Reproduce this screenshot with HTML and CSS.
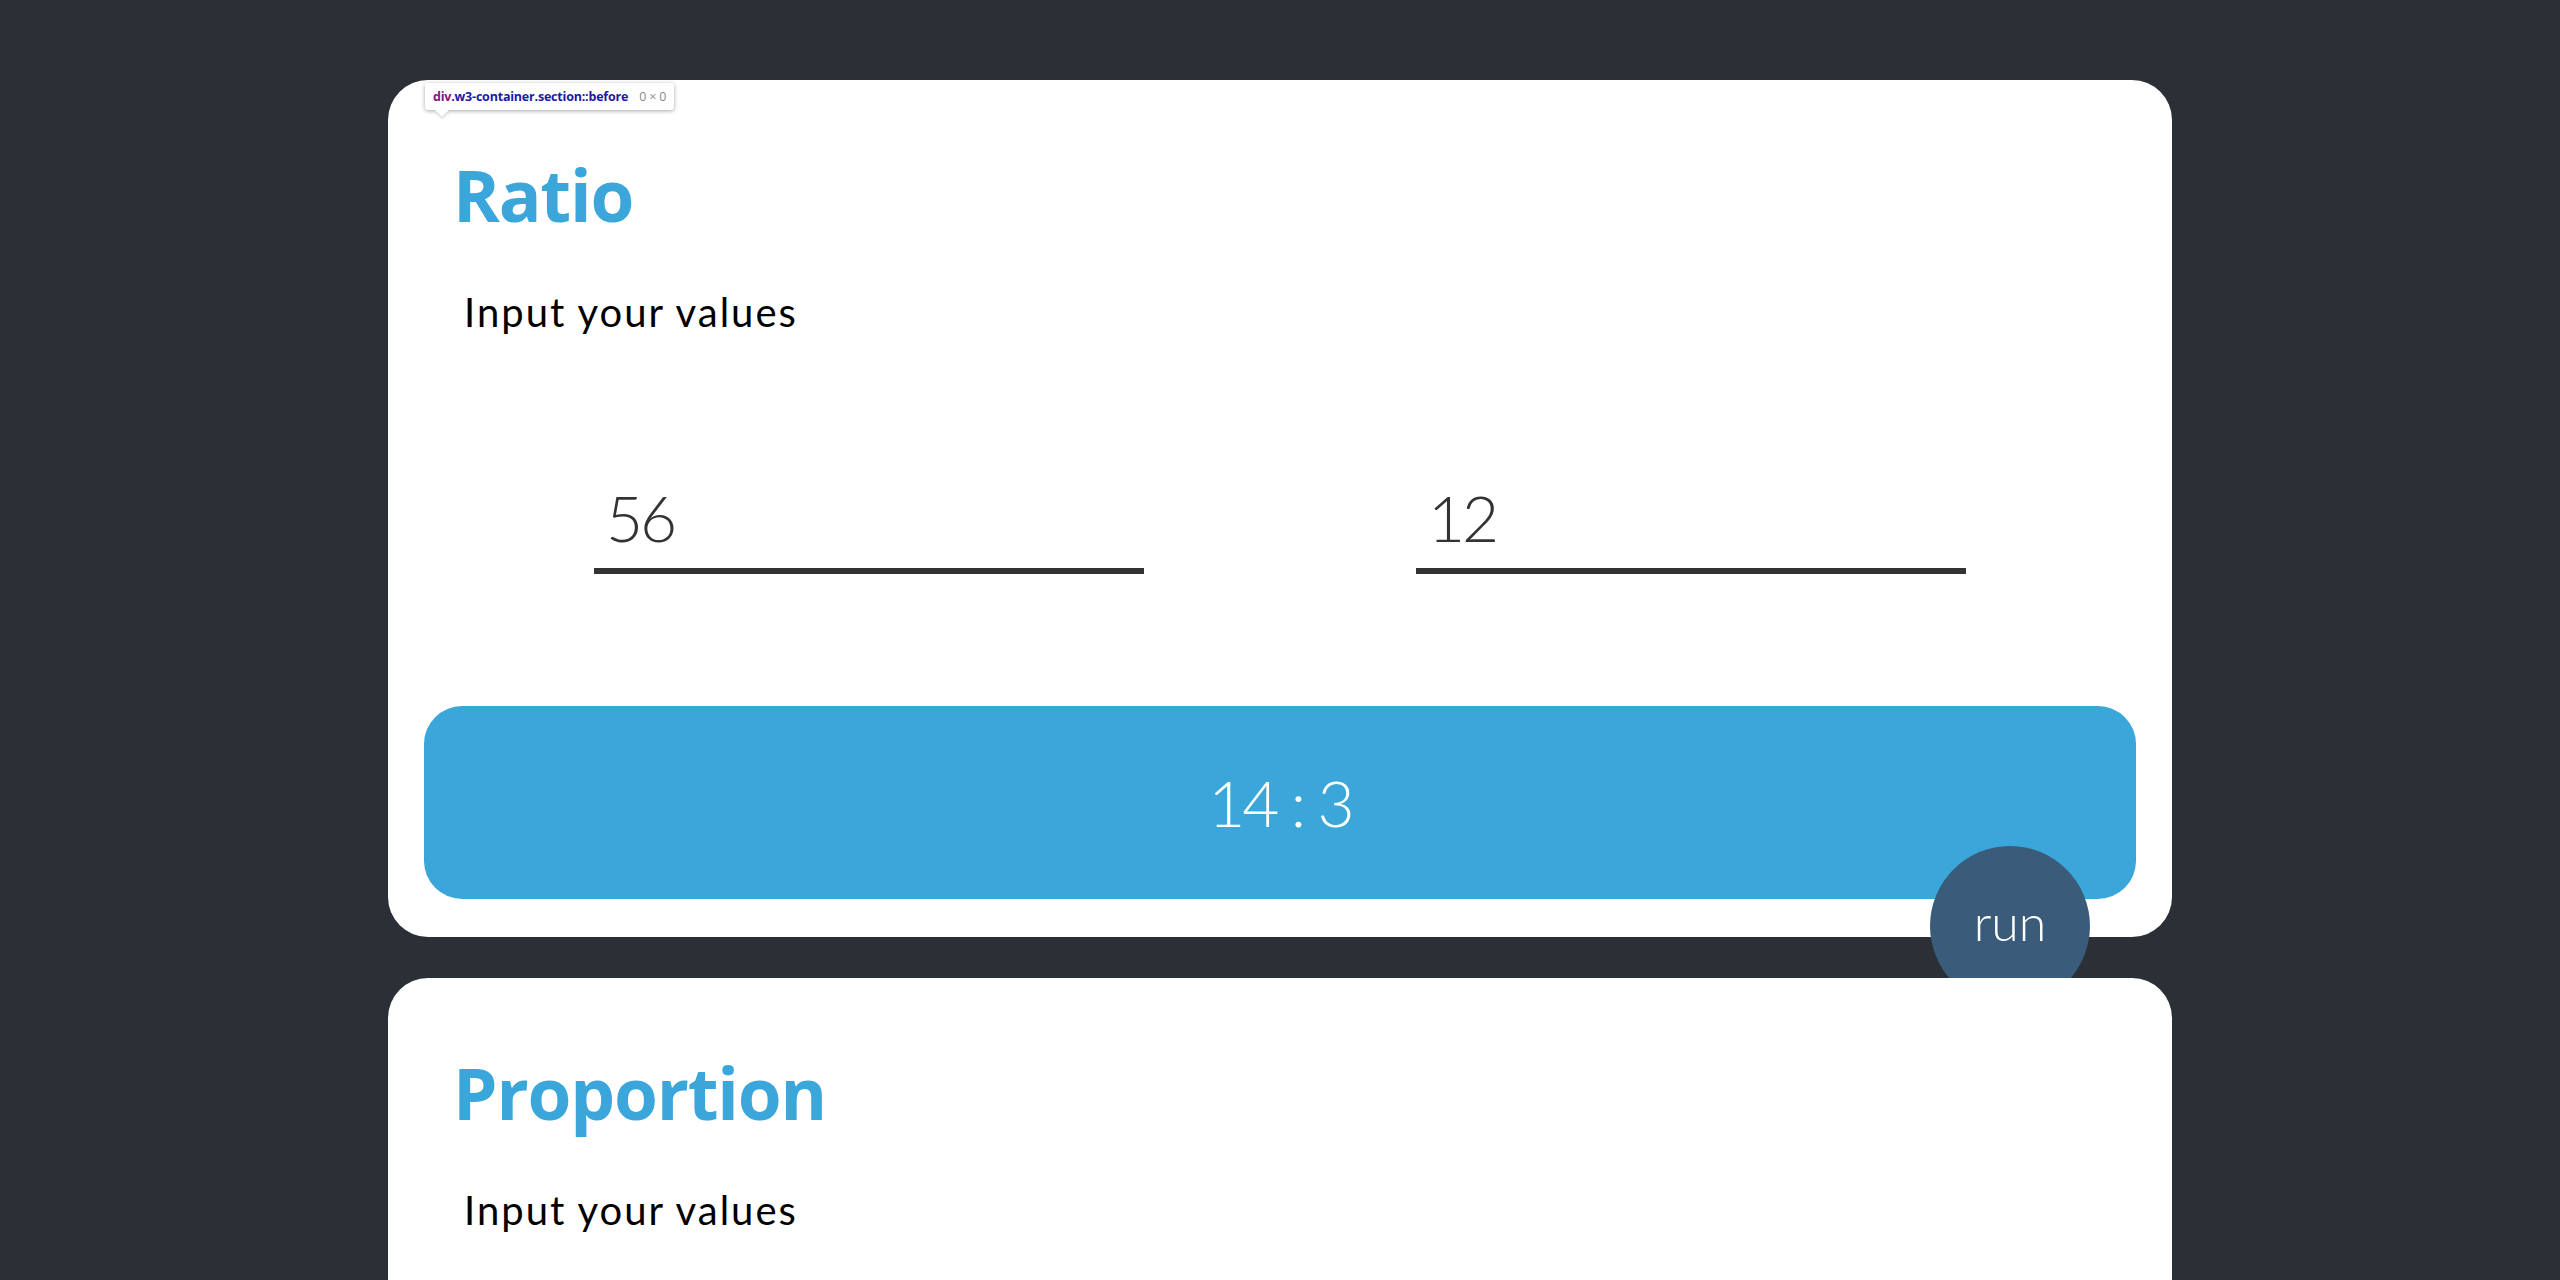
FILE: index.html
```html
<!DOCTYPE html>
<html>
<head>
<meta charset="utf-8">
<link rel="stylesheet" href="styles.css">
</head>
<body>
<main class="page">
  <section class="card">
    <div class="tooltip"><span class="tt-tag">div</span><span class="tt-cls">.w3-container.section::before</span><span class="tt-size">0 × 0</span></div>
    <h1 class="title">Ratio</h1>
    <p class="lead">Input your values</p>
    <div class="fields">
      <div class="field">56</div>
      <div class="field">12</div>
    </div>
    <div class="result">14 : 3</div>
    <button class="run">run</button>
  </section>
  <section class="card card-tall">
    <h1 class="title">Proportion</h1>
    <p class="lead">Input your values</p>
  </section>
</main>
</body>
</html>
```
FILE: styles.css
```css
html, body {
  margin: 0;
  height: 100%;
  overflow: hidden;
}
body {
  background: #2b2f36;
  font-family: "Lato", "Open Sans", sans-serif;
}
.page {
  display: flex;
  flex-direction: column;
  align-items: center;
  gap: 41px;
  padding-top: 80px;
}
.card {
  position: relative;
  box-sizing: border-box;
  width: 1784px;
  background: #ffffff;
  border-radius: 40px;
  padding: 0 36px 38px;
}
.card-tall {
  padding-bottom: 400px;
}
.tooltip {
  position: absolute;
  left: 37px;
  top: 3px;
  height: 27px;
  display: flex;
  align-items: center;
  padding: 0 8px;
  background: #fff;
  border-radius: 3px;
  box-shadow: 0 1px 4px rgba(0,0,0,0.35);
  font-family: "Open Sans", sans-serif;
  font-size: 12.5px;
  letter-spacing: -0.2px;
  white-space: nowrap;
}
.tooltip::after {
  content: "";
  position: absolute;
  left: 10px;
  bottom: -7px;
  width: 0;
  height: 0;
  border-left: 7px solid transparent;
  border-right: 7px solid transparent;
  border-top: 7px solid #fff;
  filter: drop-shadow(0 2px 1px rgba(0,0,0,0.15));
}
.tt-tag { color: #881280; font-weight: 700; }
.tt-cls { color: #1a1aa6; font-weight: 700; }
.tt-size { color: #888; margin-left: 11px; }
.title {
  margin: 79px 0 0 29px;
  font-family: "Open Sans", sans-serif;
  font-weight: 700;
  font-size: 71px;
  line-height: 72px;
  color: #3aa6d9;
  letter-spacing: -1.2px;
}
.lead {
  margin: 57px 0 0 40px;
  font-size: 40px;
  line-height: 48px;
  color: #000;
  font-weight: 400;
  letter-spacing: 2px;
}
.fields {
  display: flex;
  justify-content: center;
  gap: 272px;
  margin-top: 150px;
}
.field {
  width: 550px;
  box-sizing: border-box;
  padding: 0 0 18px 12px;
  border-bottom: 6px solid #333333;
  font-size: 64px;
  line-height: 64px;
  font-weight: 300;
  letter-spacing: -3px;
  color: #333;
}
.result {
  margin-top: 132px;
  height: 193px;
  border-radius: 38px;
  background: #3aa6d9;
  color: #fff;
  display: flex;
  align-items: center;
  justify-content: center;
  font-size: 64px;
  font-weight: 300;
  letter-spacing: -3px;
}
.run {
  position: absolute;
  left: 1542px;
  top: 766px;
  width: 160px;
  height: 160px;
  border: none;
  border-radius: 50%;
  background: #3a5b79;
  color: #fff;
  font-family: "Lato", sans-serif;
  font-size: 50px;
  font-weight: 300;
  padding: 0 0 8px;
}
```
